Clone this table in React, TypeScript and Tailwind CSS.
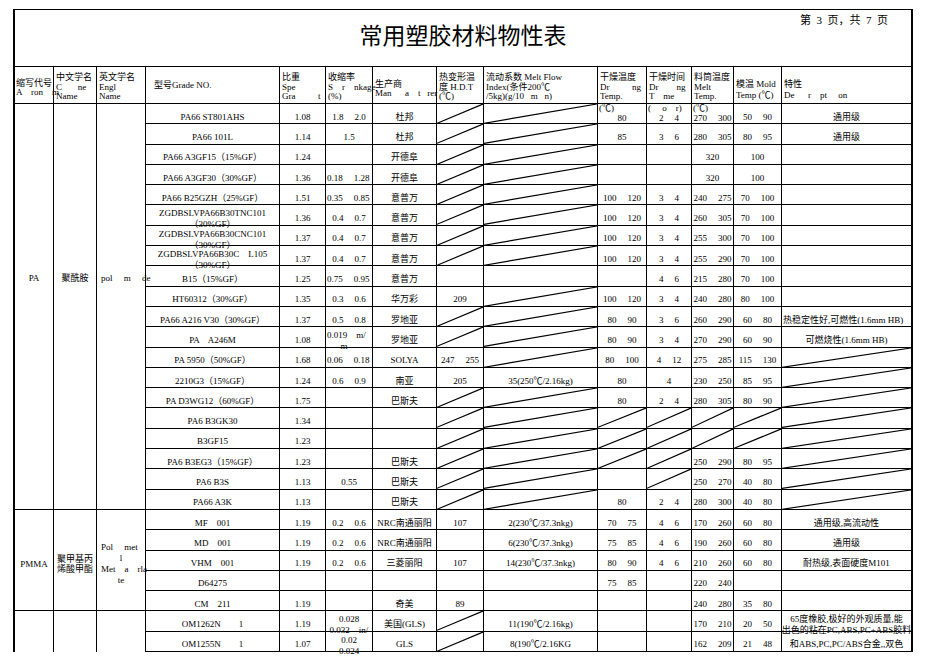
import React from "react";

type Cell = string | { top: string; v: string } | { lines: string[]; left?: boolean };
type Row = Cell[];

// column widths, left to right
const W = [
  "w-[39px]",
  "w-[43px]",
  "w-[49px]",
  "w-[134px]",
  "w-[46px]",
  "w-[47px]",
  "w-[64px]",
  "w-[47px]",
  "w-[114px]",
  "w-[49px]",
  "w-[45px]",
  "w-[42px]",
  "w-[48px]",
  "w-[129px]",
];

// "/" = empty cell with a slash, "<" prefix = left aligned, "~" splits a range
const PA: Row[] = [
  ["PA66 ST801AHS", "1.08", "1.8~2.0", "杜邦", "/", "/", { top: "(℃)", v: "80" }, { top: "(     o    r)", v: "2~4" }, { top: "(℃)", v: "270~300" }, "50~90", "通用级"],
  ["PA66 101L", "1.14", "1.5", "杜邦", "/", "/", "85", "3~6", "280~305", "80~95", "通用级"],
  ["PA66 A3GF15（15%GF）", "1.24", "", "开德阜", "/", "/", "", "", "320", "100", ""],
  ["PA66 A3GF30（30%GF）", "1.36", "<0.18~1.28", "开德阜", "/", "/", "", "", "320", "100", ""],
  ["PA66 B25GZH（25%GF）", "1.51", "<0.35~0.85", "意普万", "/", "/", "100~120", "3~4", "240~275", "70~100", ""],
  [{ lines: ["ZGDBSLVPA66B30TNC101", "（30%GF）"] }, "1.36", "0.4~0.7", "意普万", "/", "/", "100~120", "3~4", "260~305", "70~100", ""],
  [{ lines: ["ZGDBSLVPA66B30CNC101", "（30%GF）"] }, "1.37", "0.4~0.7", "意普万", "/", "/", "100~120", "3~4", "255~300", "70~100", ""],
  [{ lines: ["ZGDBSLVPA66B30C    L105", "（30%GF）"] }, "1.37", "0.4~0.7", "意普万", "/", "/", "100~120", "3~4", "255~290", "70~100", ""],
  ["B15（15%GF）", "1.25", "<0.75~0.95", "意普万", "", "", "", "4~6", "215~280", "70~100", ""],
  ["HT60312（30%GF）", "1.35", "0.3~0.6", "华万彩", "209", "/", "100~120", "3~4", "240~280", "80~100", ""],
  ["PA66 A216 V30（30%GF）", "1.37", "0.5~0.8", "罗地亚", "/", "/", "80~90", "3~6", "260~290", "60~80", "<热稳定性好,可燃性(1.6mm HB)"],
  ["PA    A246M", "1.08", { lines: ["0.019    m/", "      m"], left: true }, "罗地亚", "/", "/", "80~90", "3~4", "270~290", "60~90", "可燃烧性(1.6mm HB)"],
  ["PA 5950（50%GF）", "1.68", "<0.06~0.18", "SOLYA", "247~255", "/", "80~100", "4~12", "275~285", "115~130", "/"],
  ["2210G3（15%GF）", "1.24", "0.6~0.9", "南亚", "205", "35(250℃/2.16kg)", "80", "4", "230~250", "85~95", "/"],
  ["PA D3WG12（60%GF）", "1.75", "", "巴斯夫", "/", "/", "80", "2~4", "280~305", "80~90", "/"],
  ["PA6 B3GK30", "1.34", "", "", "/", "/", "/", "/", "/", "/", "/"],
  ["B3GF15", "1.23", "", "", "/", "/", "/", "/", "/", "/", "/"],
  ["PA6 B3EG3（15%GF）", "1.23", "", "巴斯夫", "/", "/", "/", "/", "250~290", "80~95", "/"],
  ["PA6 B3S", "1.13", "0.55", "巴斯夫", "/", "/", "", "/", "250~270", "40~80", "/"],
  ["PA66 A3K", "1.13", "", "巴斯夫", "/", "/", "80", "2~4", "280~300", "40~80", "/"],
];

const PMMA: Row[] = [
  ["MF    001", "1.19", "0.2~0.6", "NRC南通丽阳", "107", "2(230℃/37.3nkg)", "70~75", "4~6", "170~260", "60~80", "通用级,高流动性"],
  ["MD    001", "1.19", "0.2~0.6", "NRC南通丽阳", "", "6(230℃/37.3nkg)", "75~85", "4~6", "190~260", "60~80", "通用级"],
  ["VHM    001", "1.19", "0.2~0.6", "三菱丽阳", "107", "14(230℃/37.3nkg)", "80~90", "4~6", "210~260", "60~80", "耐热级,表面硬度M101"],
  ["D64275", "", "", "", "", "", "75~85", "", "220~240", "", ""],
  ["CM    211", "1.19", "", "奇美", "89", "", "", "", "240~280", "35~80", ""],
];

const TPE: Row[] = [
  ["OM1262N        1", "1.19", { lines: ["0.028", "0.032    in/"] }, "美国(GLS)", "/", "11(190℃/2.16kg)", "", "", "170~210", "20~50", { lines: ["65度橡胶,极好的外观质量,能", "出色的粘在PC,ABS,PC+ABS胶料"] }],
  ["OM1255N        1", "1.07", { lines: ["0.02", "0.024"] }, "GLS", "/", "8(190℃/2.16KG", "", "", "162~209", "21~48", "和ABS,PC,PC/ABS合金,,双色"],
];

function Slash() {
  return (
    <svg
      className="pointer-events-none absolute inset-0 h-full w-full"
      viewBox="0 0 100 100"
      preserveAspectRatio="none"
    >
      <line x1="0" y1="100" x2="100" y2="0" stroke="#000" strokeWidth="1.2" vectorEffect="non-scaling-stroke" />
    </svg>
  );
}

function Val({ s }: { s: string }) {
  if (s.includes("~")) {
    const [a, b] = s.split("~");
    return (
      <span className="flex gap-[11px]">
        <span>{a}</span>
        <span>{b}</span>
      </span>
    );
  }
  return <span className="whitespace-pre">{s}</span>;
}

function DataCell({ c, w, last }: { c: Cell; w: string; last?: boolean }) {
  const base = `relative h-full shrink-0 border-b border-black whitespace-nowrap ${w} ${last ? "" : "border-r"}`;
  if (c === "/") {
    return (
      <div className={base}>
        <Slash />
      </div>
    );
  }
  if (typeof c === "string") {
    const left = c.startsWith("<");
    const s = left ? c.slice(1) : c;
    return (
      <div className={`${base} flex items-center pt-[6px] leading-[12px] ${left ? "justify-start pl-px" : "justify-center"}`}>
        {s && <Val s={s} />}
      </div>
    );
  }
  if ("top" in c) {
    return (
      <div className={`${base} flex flex-col`}>
        <div className="whitespace-pre pl-px leading-[9px]">{c.top}</div>
        <div className="flex justify-center leading-[10px]">
          <Val s={c.v} />
        </div>
      </div>
    );
  }
  return (
    <div className={`${base} flex flex-col pt-[3px] leading-[11px] ${c.left ? "items-start pl-px" : "items-center"}`}>
      {c.lines.map((l, i) => (
        <div key={i} className="whitespace-pre">
          {l}
        </div>
      ))}
    </div>
  );
}

function Rows({ rows }: { rows: Row[] }) {
  return (
    <div className="flex flex-col">
      {rows.map((r, i) => (
        <div key={i} className="flex h-[20.3px]">
          {r.map((c, j) => (
            <DataCell key={j} c={c} w={W[j + 3]} last={j === r.length - 1} />
          ))}
        </div>
      ))}
    </div>
  );
}

export default function App() {
  return (
    <div className="min-h-screen bg-white pt-[9px] font-['Liberation_Serif','Noto_Sans_CJK_SC',serif] text-[9px] text-black">
      <div className="ml-[13px] w-[900px] border-x-2 border-t-[1.5px] border-black">
        {/* title */}
        <div className="grid h-[57px] grid-cols-[1fr_auto_1fr] border-b border-black">
          <div />
          <h1 className="pt-[10px] font-['Noto_Sans_CJK_SC',sans-serif] text-[23px] leading-[28px]">常用塑胶材料物性表</h1>
          <div className="flex justify-end pr-[23px] pt-[3px] text-[11px] leading-[14px] whitespace-pre">
            第  3  页，共  7  页
          </div>
        </div>

        {/* column headers */}
        <div className="flex h-[37px] whitespace-pre border-b border-black">
          <div className={`${W[0]} shrink-0 border-r border-black pl-px pt-[12px] leading-[9px]`}>
            <div>缩写代号</div>
            <div>A    ron    m</div>
          </div>
          <div className={`${W[1]} shrink-0 border-r border-black pl-[2px] pt-[6px] leading-[9.5px]`}>
            <div>中文学名</div>
            <div>C       ne</div>
            <div>Name</div>
          </div>
          <div className={`${W[2]} shrink-0 border-r border-black pl-[2px] pt-[6px] leading-[9.5px]`}>
            <div>英文学名</div>
            <div>Engl</div>
            <div>Name</div>
          </div>
          <div className={`${W[3]} flex shrink-0 items-center border-r border-black pl-[8px] pt-[2px]`}>
            型号Grade NO.
          </div>
          <div className={`${W[4]} shrink-0 border-r border-black pl-[2px] pt-[6px] leading-[9.5px]`}>
            <div>比重</div>
            <div>Spe</div>
            <div>Gra          t</div>
          </div>
          <div className={`${W[5]} shrink-0 border-r border-black pl-[2px] pt-[6px] leading-[9.5px]`}>
            <div>收缩率</div>
            <div>S    r    nkage</div>
            <div>(%)</div>
          </div>
          <div className={`${W[6]} shrink-0 border-r border-black pl-[2px] pt-[13px] leading-[9px]`}>
            <div>生产商</div>
            <div>Man      a    t   rer</div>
          </div>
          <div className={`${W[7]} shrink-0 border-r border-black pl-[2px] pt-[6px] leading-[9.5px]`}>
            <div>热变形温</div>
            <div>度 H.D.T</div>
            <div>(℃)</div>
          </div>
          <div className={`${W[8]} shrink-0 border-r border-black pl-[2px] pt-[6px] leading-[9.5px]`}>
            <div>流动系数 Melt Flow</div>
            <div>Index(条件200℃</div>
            <div>/5kg)(g/10   m   n)</div>
          </div>
          <div className={`${W[9]} shrink-0 border-r border-black pl-[2px] pt-[6px] leading-[9.5px]`}>
            <div>干燥温度</div>
            <div>Dr          ng</div>
            <div>Temp.</div>
          </div>
          <div className={`${W[10]} shrink-0 border-r border-black pl-[2px] pt-[6px] leading-[9.5px]`}>
            <div>干燥时间</div>
            <div>Dr        ng</div>
            <div>T    me</div>
          </div>
          <div className={`${W[11]} shrink-0 border-r border-black pl-[2px] pt-[6px] leading-[9.5px]`}>
            <div>料筒温度</div>
            <div>Melt</div>
            <div>Temp.</div>
          </div>
          <div className={`${W[12]} shrink-0 border-r border-black pl-[2px] pt-[12px] leading-[11px]`}>
            <div>模温 Mold</div>
            <div>Temp (℃)</div>
          </div>
          <div className={`${W[13]} shrink-0 pl-[2px] pt-[12px] leading-[11px]`}>
            <div>特性</div>
            <div>De      r    pt     on</div>
          </div>
        </div>

        {/* PA */}
        <div className="flex">
          <div className={`${W[0]} shrink-0 border-b border-r border-black pt-[168px] text-center leading-[12px]`}>PA</div>
          <div className={`${W[1]} shrink-0 border-b border-r border-black pt-[168px] text-center leading-[12px]`}>聚酰胺</div>
          <div className={`${W[2]} shrink-0 whitespace-pre border-b border-r border-black pl-[4px] pt-[168px] leading-[12px]`}>
            pol     m     de
          </div>
          <Rows rows={PA} />
        </div>

        {/* PMMA */}
        <div className="flex">
          <div className={`${W[0]} shrink-0 border-b border-r border-black pt-[48px] text-center leading-[12px]`}>PMMA</div>
          <div className={`${W[1]} shrink-0 border-b border-r border-black pl-[3px] pt-[44px] leading-[10px]`}>
            <div>聚甲基丙</div>
            <div>烯酸甲酯</div>
          </div>
          <div className={`${W[2]} shrink-0 whitespace-pre border-b border-r border-black pt-[32px] leading-[11px]`}>
            <div className="pl-[4px]">Pol     met</div>
            <div className="text-center">l</div>
            <div className="pl-[4px]">Met    a    rla</div>
            <div className="text-center">te</div>
          </div>
          <Rows rows={PMMA} />
        </div>

        {/* TPE */}
        <div className="flex">
          <div className={`${W[0]} shrink-0 border-r border-black`} />
          <div className={`${W[1]} shrink-0 border-r border-black`} />
          <div className={`${W[2]} shrink-0 border-r border-black`} />
          <Rows rows={TPE} />
        </div>
      </div>
    </div>
  );
}
